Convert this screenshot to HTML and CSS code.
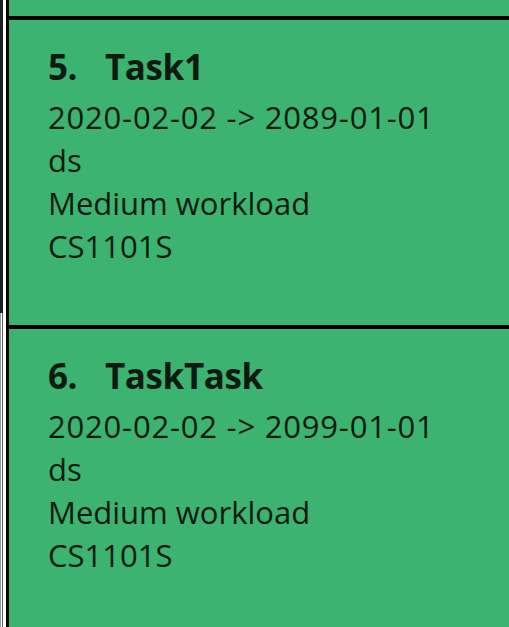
FILE: index.html
```html
<!DOCTYPE html>
<html>
<head>
<meta charset="utf-8">
<link rel="stylesheet" href="styles.css">
</head>
<body>
<div class="app">
  <div class="rail">
    <div class="rail-top"></div>
    <div class="rail-bottom"></div>
  </div>
  <div class="viewport">
    <div class="list">
      <div class="card-tail"></div>
      <div class="card">
        <div class="title"><span class="idx">5.</span>Task1</div>
        <div class="line date">2020-02-02 -&gt; 2089-01-01</div>
        <div class="line">ds</div>
        <div class="line">Medium workload</div>
        <div class="line">CS1101S</div>
      </div>
      <div class="card">
        <div class="title"><span class="idx">6.</span>TaskTask</div>
        <div class="line date">2020-02-02 -&gt; 2099-01-01</div>
        <div class="line">ds</div>
        <div class="line">Medium workload</div>
        <div class="line">CS1101S</div>
      </div>
    </div>
  </div>
</div>
</body>
</html>
```

FILE: styles.css
```css
html, body {
  margin: 0;
  padding: 0;
  background: #ffffff;
}
.app {
  display: flex;
  width: 509px;
  height: 627px;
  overflow: hidden;
}
.rail {
  width: 3px;
  display: flex;
  flex-direction: column;
  flex-shrink: 0;
}
.rail-top {
  height: 313px;
  background: #1e1e1e;
}
.rail-bottom {
  flex: 1;
  background: linear-gradient(to right, #9a9a9a 0 1px, #ffffff 1px 2px, #5a5a5a 2px 3px);
}
.viewport {
  flex: 1;
  margin-left: 3px;
  overflow: hidden;
}
.list {
  width: 560px;
}
.card-tail {
  height: 16px;
  background: #3cb371;
  border-left: 3px solid #000;
}
.card {
  box-sizing: border-box;
  height: 309px;
  background: #3cb371;
  border-top: 4px solid #000;
  border-left: 3px solid #000;
  padding: 23px 0 0 39px;
  font-family: "Open Sans", "Noto Sans", sans-serif;
  color: #0c1a10;
}
.title {
  font-weight: 700;
  font-size: 35px;
  line-height: 48px;
  letter-spacing: -0.4px;
  margin-bottom: 5px;
}
.idx {
  display: inline-block;
  width: 57px;
}
.line {
  font-size: 31px;
  line-height: 43px;
}
.date {
  letter-spacing: 0.8px;
}
```
